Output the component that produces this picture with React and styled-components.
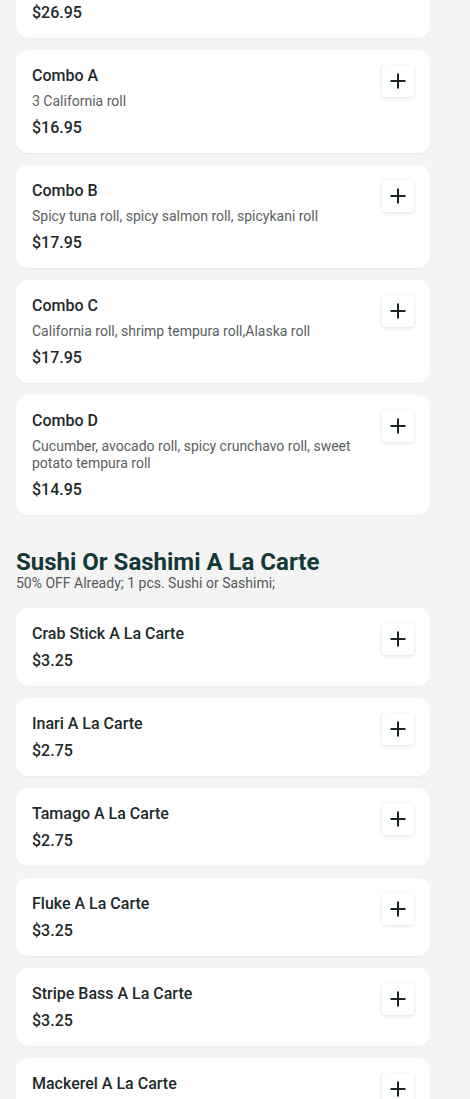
import React from "react";
import styled, { createGlobalStyle } from "styled-components";

const GlobalStyle = createGlobalStyle`
  html, body {
    margin: 0;
    padding: 0;
    background: #f4f4f4;
  }
  body {
    font-family: Roboto, "Liberation Sans", Arial, sans-serif;
    -webkit-font-smoothing: antialiased;
  }
`;

const Page = styled.div`
  width: 414px;
  padding: 0 16px;
  margin-top: -65px;
  display: flex;
  flex-direction: column;
  gap: 34px;
`;

const Section = styled.section`
  display: flex;
  flex-direction: column;
  gap: 12px;
`;

const SectionHeader = styled.header`
  display: flex;
  flex-direction: column;
  margin-bottom: 4px;
`;

const SectionTitle = styled.h2`
  margin: 0;
  font-size: 24px;
  line-height: 26px;
  font-weight: 700;
  color: #143836;
`;

const SectionSubtitle = styled.p`
  margin: 0;
  font-size: 14px;
  line-height: 17px;
  color: #555b5b;
`;

const Card = styled.div`
  background: #ffffff;
  border-radius: 12px;
  padding: 16px 16px 15px;
  display: flex;
  align-items: flex-start;
  justify-content: space-between;
  gap: 16px;
  box-shadow: 0 1px 2px rgba(0, 0, 0, 0.04);
`;

const Info = styled.div`
  display: flex;
  flex-direction: column;
  flex: 1;
  min-width: 0;
`;

const ItemName = styled.div`
  font-size: 16px;
  line-height: 20px;
  font-weight: 500;
  color: #1d2a2a;
`;

const ItemDesc = styled.div`
  margin-top: 7px;
  font-size: 14px;
  line-height: 17px;
  color: #595f5f;
`;

const ItemPrice = styled.div`
  margin-top: ${(p) => (p.$hasDesc ? "8px" : "7px")};
  font-size: 16px;
  line-height: 20px;
  font-weight: 500;
  color: #1d2a2a;
`;

const AddButton = styled.button`
  flex: none;
  width: 32px;
  height: 32px;
  margin-top: -1px;
  padding: 0;
  border: none;
  border-radius: 4px;
  background: #ffffff;
  box-shadow: 0 1px 4px rgba(0, 0, 0, 0.12);
  display: flex;
  align-items: center;
  justify-content: center;
  color: #1a2626;
  cursor: pointer;
`;

const PlusIcon = () => (
  <svg width="18" height="18" viewBox="0 0 18 18" fill="none">
    <path d="M9 1.5V16.5M1.5 9H16.5" stroke="currentColor" strokeWidth="2" />
  </svg>
);

const MenuItem = ({ name, desc, price }) => (
  <Card>
    <Info>
      <ItemName>{name}</ItemName>
      {desc && <ItemDesc>{desc}</ItemDesc>}
      <ItemPrice $hasDesc={!!desc}>{price}</ItemPrice>
    </Info>
    <AddButton aria-label={`Add ${name}`}>
      <PlusIcon />
    </AddButton>
  </Card>
);

const combos = [
  { name: "Combo Special", desc: "Chef's choice combination", price: "$26.95" },
  { name: "Combo A", desc: "3 California roll", price: "$16.95" },
  { name: "Combo B", desc: "Spicy tuna roll, spicy salmon roll, spicykani roll", price: "$17.95" },
  { name: "Combo C", desc: "California roll, shrimp tempura roll,Alaska roll", price: "$17.95" },
  {
    name: "Combo D",
    desc: "Cucumber, avocado roll, spicy crunchavo roll, sweet potato tempura roll",
    price: "$14.95",
  },
];

const alaCarte = [
  { name: "Crab Stick A La Carte", price: "$3.25" },
  { name: "Inari A La Carte", price: "$2.75" },
  { name: "Tamago A La Carte", price: "$2.75" },
  { name: "Fluke A La Carte", price: "$3.25" },
  { name: "Stripe Bass A La Carte", price: "$3.25" },
  { name: "Mackerel A La Carte", price: "$3.25" },
];

export default function App() {
  return (
    <>
      <GlobalStyle />
      <Page>
        <Section>
          {combos.map((it) => (
            <MenuItem key={it.name} {...it} />
          ))}
        </Section>
        <Section>
          <SectionHeader>
            <SectionTitle>Sushi Or Sashimi A La Carte</SectionTitle>
            <SectionSubtitle>50% OFF Already; 1 pcs. Sushi or Sashimi;</SectionSubtitle>
          </SectionHeader>
          {alaCarte.map((it) => (
            <MenuItem key={it.name} {...it} />
          ))}
        </Section>
      </Page>
    </>
  );
}
